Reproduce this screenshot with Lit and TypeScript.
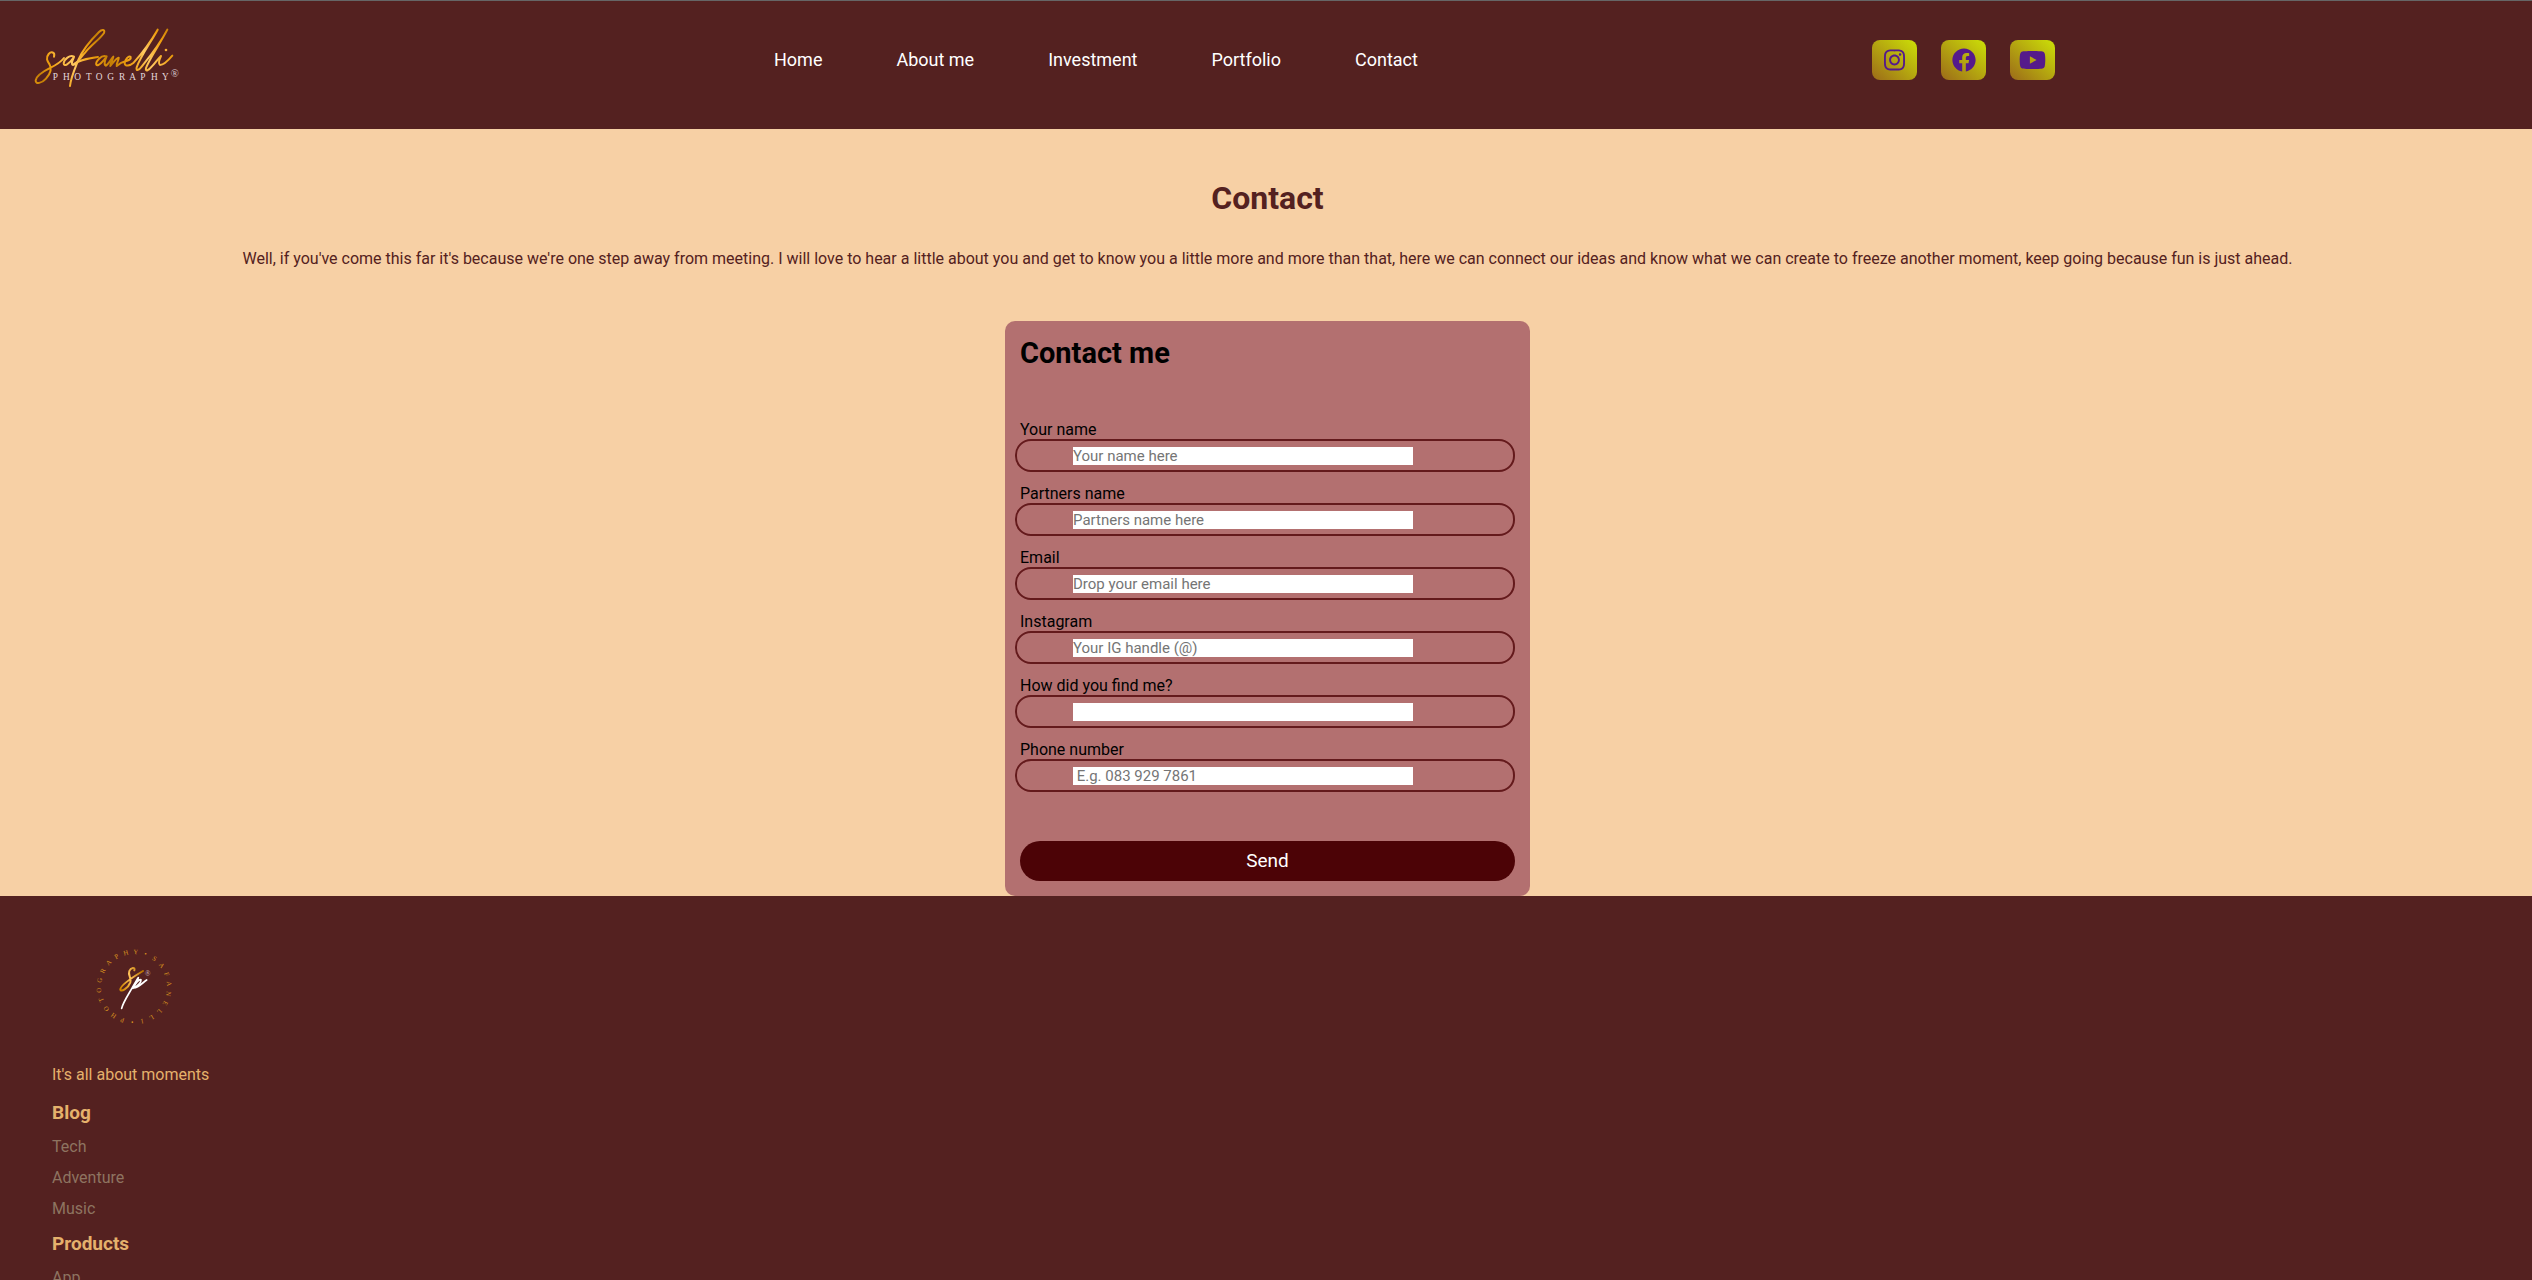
import { LitElement, html, css, svg } from "lit";
import { customElement, property } from "lit/decorators.js";

interface Field {
  id: string;
  label: string;
  type: string;
  placeholder: string;
}

const NAV = ["Home", "About me", "Investment", "Portfolio", "Contact"];

const FIELDS: Field[] = [
  { id: "name", label: "Your name", type: "text", placeholder: "Your name here" },
  { id: "partner", label: "Partners name", type: "text", placeholder: "Partners name here" },
  { id: "email", label: "Email", type: "email", placeholder: "Drop your email here" },
  { id: "instagram", label: "Instagram", type: "text", placeholder: "Your IG handle (@)" },
  { id: "source", label: "How did you find me?", type: "text", placeholder: "" },
  { id: "phone", label: "Phone number", type: "tel", placeholder: " E.g. 083 929 7861" },
];

const SOCIAL = [
  {
    name: "Instagram",
    box: "0 0 448 512",
    path: "M224.1 141c-63.6 0-114.9 51.3-114.9 114.9s51.3 114.9 114.9 114.9S339 319.5 339 255.9 287.7 141 224.1 141zm0 189.6c-41.1 0-74.7-33.5-74.7-74.7s33.5-74.7 74.7-74.7 74.7 33.5 74.7 74.7-33.6 74.7-74.7 74.7zm146.4-194.3c0 14.9-12 26.8-26.8 26.8-14.9 0-26.8-12-26.8-26.8s12-26.8 26.8-26.8 26.8 12 26.8 26.8zm76.1 27.2c-1.7-35.9-9.9-67.7-36.2-93.9-26.2-26.2-58-34.4-93.9-36.2-37-2.1-147.9-2.1-184.9 0-35.8 1.7-67.6 9.9-93.9 36.1s-34.4 58-36.2 93.9c-2.1 37-2.1 147.9 0 184.9 1.7 35.9 9.9 67.7 36.2 93.9s58 34.4 93.9 36.2c37 2.1 147.9 2.1 184.9 0 35.9-1.7 67.7-9.9 93.9-36.2 26.2-26.2 34.4-58 36.2-93.9 2.1-37 2.1-147.8 0-184.8zM398.8 388c-7.8 19.6-22.9 34.7-42.6 42.6-29.5 11.7-99.5 9-132.1 9s-102.7 2.6-132.1-9c-19.6-7.8-34.7-22.9-42.6-42.6-11.7-29.5-9-99.5-9-132.1s-2.6-102.7 9-132.1c7.8-19.6 22.9-34.7 42.6-42.6 29.5-11.7 99.5-9 132.1-9s102.7-2.6 132.1 9c19.6 7.8 34.7 22.9 42.6 42.6 11.7 29.5 9 99.5 9 132.1s2.7 102.7-9 132.1z",
  },
  {
    name: "Facebook",
    box: "0 0 512 512",
    path: "M504 256C504 119 393 8 256 8S8 119 8 256c0 123.78 90.69 226.38 209.25 245V327.69h-63V256h63v-54.64c0-62.15 37-96.48 93.67-96.48 27.14 0 55.52 4.84 55.52 4.84v61h-31.28c-30.8 0-40.41 19.12-40.41 38.73V256h68.78l-11 71.69h-57.78V501C413.31 478.38 504 379.78 504 256z",
  },
  {
    name: "YouTube",
    box: "0 0 576 512",
    path: "M549.655 124.083c-6.281-23.65-24.787-42.276-48.284-48.597C458.781 64 288 64 288 64S117.22 64 74.629 75.486c-23.497 6.322-42.003 24.947-48.284 48.597-11.412 42.867-11.412 132.305-11.412 132.305s0 89.438 11.412 132.305c6.281 23.65 24.787 41.5 48.284 47.821C117.22 448 288 448 288 448s170.78 0 213.371-11.486c23.497-6.321 42.003-24.171 48.284-47.821 11.412-42.867 11.412-132.305 11.412-132.305s0-89.438-11.412-132.305zm-317.51 213.508V175.185l142.739 81.205-142.739 81.201z",
  },
];

const SECTIONS = [
  { title: "Blog", links: ["Tech", "Adventure", "Music"] },
  { title: "Products", links: ["App"] },
];

/* Letters of the round seal, clockwise from just right of the top. */
const SEAL = [..."Y•SAFANELLI•PHOTOGRAPH"];

@customElement("brand-logo")
class BrandLogo extends LitElement {
  static styles = css`
    :host { display: block; }
    .logo { display: block; width: 147px; height: 62px; }
    .script { fill: none; stroke: url(#gold); stroke-width: 6; stroke-linecap: round; stroke-linejoin: round; }
    .dot { fill: #f5ae35; }
    .caption { font: 28px "Liberation Serif", serif; fill: #e3d8dc; }
    .mark { font: 32px "Liberation Serif", serif; fill: #d9cbd0; }
  `;
  render() {
    return html`
      <svg class="logo" viewBox="99 81 441 186" role="img" aria-label="Safanelli Photography">
        <defs>
          <linearGradient id="gold" gradientUnits="userSpaceOnUse" x1="105" y1="200" x2="195" y2="150" spreadMethod="reflect">
            <stop offset="0" stop-color="#c47e05" />
            <stop offset="0.45" stop-color="#f0a010" />
            <stop offset="1" stop-color="#ffc860" />
          </linearGradient>
        </defs>
        <g class="script">
          <path d="M162 170C166 155 153 154 146 162C136 174 142 184 149 194C158 208 148 224 138 236C126 250 106 254 107 241C109 228 132 213 152 203C170 194 184 184 192 174" />
          <path d="M222 170C210 163 192 178 191 190C191 202 208 192 222 171C216 184 213 194 219 195C228 194 242 172 256 157C275 134 300 117 312 99C316 88 306 87 297 96C276 117 248 148 235 180C224 208 213 232 210 258" />
          <path d="M222 192C236 180 262 176 294 171" />
          <path d="M319 169C304 163 286 186 289 194C294 201 312 182 320 169C314 182 311 195 318 197C326 192 334 176 340 170C338 180 332 190 331 198C339 188 350 172 356 173C358 179 347 192 350 198C357 192 366 186 376 184C386 182 394 177 392 171C386 165 374 180 374 190C375 201 390 197 401 188C428 158 456 118 473 89C453 126 420 172 410 202C407 216 418 209 425 200C455 163 485 122 502 89C482 128 447 178 438 204C435 217 447 210 455 200C467 188 474 176 483 168C478 179 473 191 480 195C491 195 506 180 517 167" />
        </g>
        <circle class="dot" cx="498" cy="150" r="4" />
        <text class="caption" x="158 189 223 258 287 322 357 388 421 453 486" y="241">PHOTOGRAPHY</text>
        <text class="mark" x="512" y="231">®</text>
      </svg>
    `;
  }
}

@customElement("brand-seal")
class BrandSeal extends LitElement {
  static styles = css`
    :host { display: block; }
    .seal { display: block; width: 80px; height: 80px; }
    .ring { font: 20px "Liberation Serif", serif; fill: #d9931f; text-anchor: middle; }
    .gold { fill: none; stroke: url(#seal-gold); stroke-width: 6; stroke-linecap: round; }
    .white { fill: none; stroke: #fff; stroke-width: 5; stroke-linecap: round; stroke-linejoin: round; }
    .mark { font: 23px "Liberation Serif", serif; fill: #c9b4bb; text-anchor: middle; }
  `;
  render() {
    return html`
      <svg class="seal" viewBox="-120 -120 240 240" role="img" aria-label="Safanelli Photography seal">
        <defs>
          <linearGradient id="seal-gold" gradientUnits="userSpaceOnUse" x1="-40" y1="0" x2="30" y2="-30">
            <stop offset="0" stop-color="#d08600" />
            <stop offset="0.5" stop-color="#ffc35a" />
            <stop offset="1" stop-color="#b97300" />
          </linearGradient>
        </defs>
        ${SEAL.map(
          (letter, i) => svg`<text class="ring" y="-99" transform="rotate(${3 + (i * 360) / SEAL.length})">${letter}</text>`
        )}
        <path class="gold" d="M1 -50C5 -61 -10 -58 -14 -48C-19 -35 -7 -28 -11 -14C-17 3 -41 18 -41 7C-40 -7 -3 -30 27 -48" />
        <path class="white" d="M-37 64C-33 46 -15 20 -3 -2C5 -15 10 -25 13 -28C10 -18 2 -6 -3 4C4 -10 15 -24 21 -22C22 -12 6 -1 -1 3C14 2 27 -14 38 -21" />
        <text class="mark" x="41" y="-33">®</text>
      </svg>
    `;
  }
}

@customElement("form-field")
class FormField extends LitElement {
  @property({ attribute: false }) field!: Field;
  static styles = css`
    :host { display: block; }
    .label { display: block; padding-left: 5px; font-size: 16px; line-height: 19px; }
    .box {
      box-sizing: border-box;
      height: 33px;
      display: flex;
      align-items: flex-start;
      padding: 6px 100px 0 56px;
      border: 2px solid #641a1c;
      border-radius: 16px;
    }
    .input {
      display: block;
      flex: 0 1 340px;
      min-width: 0;
      height: 18px;
      padding: 0;
      border: 0;
      outline: 0;
      background: #fff;
      font: 15px/18px Roboto, sans-serif;
    }
    .input::placeholder { color: #757575; }
  `;
  render() {
    const f = this.field;
    return html`
      <label class="label" for=${f.id}>${f.label}</label>
      <div class="box">
        <input class="input" id=${f.id} name=${f.id} type=${f.type} placeholder=${f.placeholder} />
      </div>
    `;
  }
}

@customElement("app-root")
class AppRoot extends LitElement {
  static styles = css`
    :host {
      display: flex;
      flex-direction: column;
      height: 100vh;
      overflow: hidden;
      background: #f7d0a5;
      font-family: Roboto, sans-serif;
      font-size: 16px;
      line-height: 19px;
      color: #000;
    }
    a { text-decoration: none; }
    h1, h2, h3, p, ul { margin: 0; padding: 0; list-style: none; }
    .header {
      box-sizing: border-box;
      flex: none;
      display: grid;
      grid-template-columns: 774fr 1098fr 660fr;
      align-items: start;
      height: 129px;
      border-top: 1px solid #666;
      background: #542120;
    }
    .brand { padding: 26px 0 0 33px; }
    .nav { display: flex; gap: 74px; padding-top: 48px; }
    .nav-link { font-size: 18px; line-height: 21px; color: #fff; white-space: nowrap; }
    .social { display: flex; gap: 24px; padding-top: 39px; }
    .social-link {
      display: flex;
      align-items: center;
      justify-content: center;
      width: 45px;
      height: 40px;
      border-radius: 8px;
      background: linear-gradient(to top right, #9c6b19, #cce007);
    }
    .social-icon { height: 24px; fill: #551a8b; }
    .main { flex: none; display: flex; flex-direction: column; align-items: center; padding: 50px 0 0 3px; }
    .title { font-size: 32px; line-height: 38px; color: #542120; }
    .intro { padding: 32px 20px 53px; color: #542120; text-align: center; }
    .form {
      box-sizing: border-box;
      width: 525px;
      max-width: 100%;
      padding: 15px 15px 15px 10px;
      border-radius: 10px;
      background: #b37070;
    }
    .form-title { padding: 0 0 50px 5px; font-size: 29px; line-height: 34px; }
    .fields { display: grid; gap: 12px; }
    .actions { display: flex; padding: 49px 0 0 5px; }
    .send {
      flex: 1;
      height: 40px;
      padding: 0;
      border: 0;
      border-radius: 20px;
      background: #4c0306;
      color: #fff;
      font: 19px/22px Roboto, sans-serif;
    }
    .footer { flex: 1; min-height: 0; padding: 51px 52px 0; background: #542120; }
    .seal { padding: 0 0 38px 42px; }
    .tagline { padding-bottom: 18px; color: #e5b16c; }
    .section { padding-bottom: 15px; }
    .section-title { padding-bottom: 13px; font-size: 19px; line-height: 22px; color: #e5b16c; }
    .section-list { display: grid; gap: 12px; }
    .section-link { color: #8e7460; }
  `;
  render() {
    return html`
      <header class="header">
        <brand-logo class="brand"></brand-logo>
        <nav class="nav">${NAV.map((t) => html`<a class="nav-link" href="#">${t}</a>`)}</nav>
        <div class="social">
          ${SOCIAL.map(
            (s) => html`<a class="social-link" href="#" aria-label=${s.name}>
              <svg class="social-icon" viewBox=${s.box}><path d=${s.path} /></svg>
            </a>`
          )}
        </div>
      </header>
      <main class="main">
        <h1 class="title">Contact</h1>
        <p class="intro">
          Well, if you've come this far it's because we're one step away from meeting. I will love to hear a little about
          you and get to know you a little more and more than that, here we can connect our ideas and know what we can
          create to freeze another moment, keep going because fun is just ahead.
        </p>
        <form class="form" @submit=${(e: Event) => e.preventDefault()}>
          <h2 class="form-title">Contact me</h2>
          <div class="fields">${FIELDS.map((f) => html`<form-field .field=${f}></form-field>`)}</div>
          <div class="actions"><button class="send" type="submit">Send</button></div>
        </form>
      </main>
      <footer class="footer">
        <brand-seal class="seal"></brand-seal>
        <p class="tagline">It's all about moments</p>
        ${SECTIONS.map(
          (s) => html`<section class="section">
            <h3 class="section-title">${s.title}</h3>
            <ul class="section-list">
              ${s.links.map((l) => html`<li><a class="section-link" href="#">${l}</a></li>`)}
            </ul>
          </section>`
        )}
      </footer>
    `;
  }
}
